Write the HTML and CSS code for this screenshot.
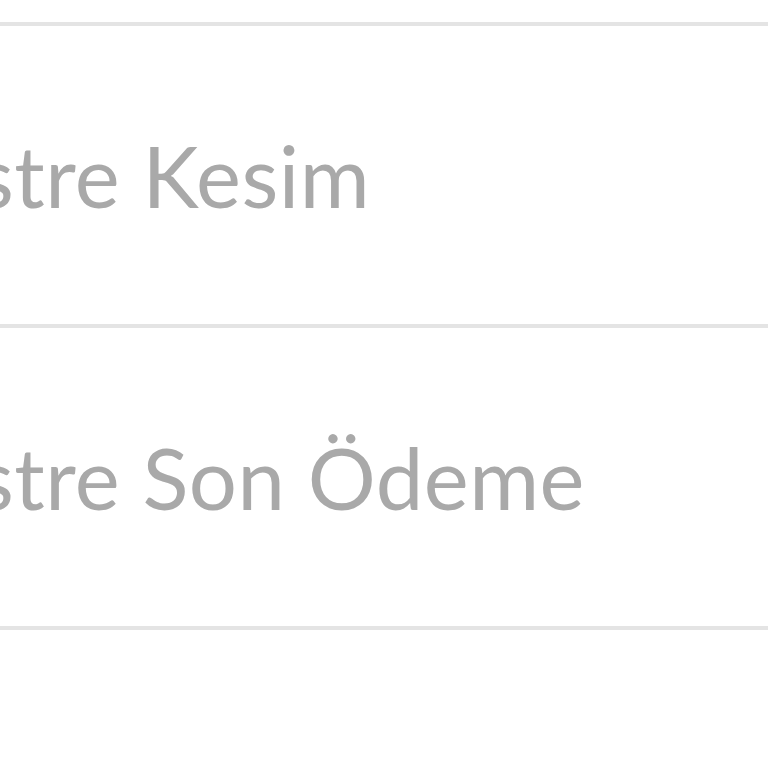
FILE: index.html
```html
<!DOCTYPE html>
<html lang="tr">
<head>
    <meta charset="UTF-8">
    <meta name="viewport" content="width=device-width, initial-scale=1.0">
    <title>Ekstre Tarihleri</title>
    <link rel="stylesheet" href="styles.css">
</head>
<body>
    <ul class="date-list">
        <li class="date-row">
            <span class="date-label">Ekstre Kesim</span>
        </li>
        <li class="date-row">
            <span class="date-label">Ekstre Son Ödeme</span>
        </li>
    </ul>
</body>
</html>
```

FILE: styles.css
```css
* {
    margin: 0;
    padding: 0;
    box-sizing: border-box;
}

:root {
    --line: #e4e4e4;
    --label: #a9a9a9;
    --white: #FFFFFF;
}

body {
    font-family: Lato, 'Open Sans', sans-serif;
    background: var(--white);
    width: 768px;
    height: 768px;
    overflow: hidden;
}

.date-list {
    list-style: none;
    margin-top: 22px;
    border-top: 4px solid var(--line);
}

.date-row {
    display: flex;
    align-items: center;
    height: 302px;
    border-bottom: 4px solid var(--line);
    filter: blur(0.7px);
}

.date-label {
    font-size: 85px;
    font-weight: 400;
    line-height: 1;
    letter-spacing: 0.5px;
    color: var(--label);
    white-space: nowrap;
    margin-left: -116px;
}
```
